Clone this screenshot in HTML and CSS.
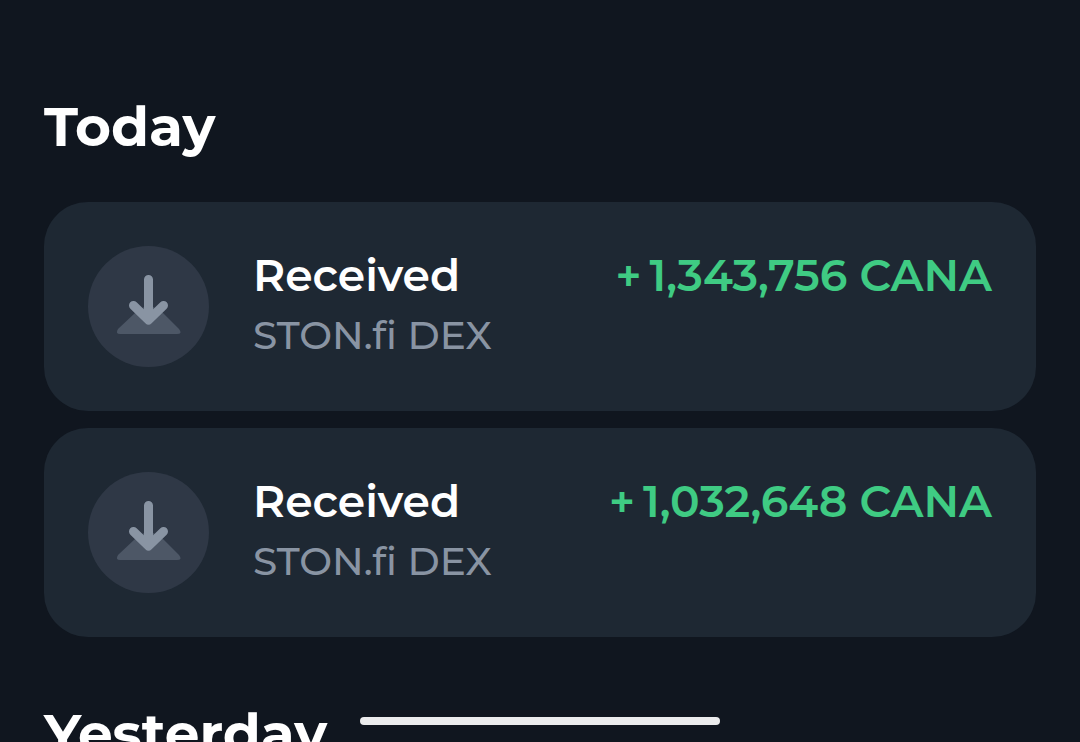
FILE: index.html
```html
<!DOCTYPE html>
<html lang="en">
<head>
    <meta charset="UTF-8">
    <meta name="viewport" content="width=device-width, initial-scale=1">
    <title>History</title>
    <link rel="stylesheet" href="styles.css">
</head>
<body>
    <svg class="sprite" aria-hidden="true">
        <symbol id="icon-receive" viewBox="0 0 121 121">
            <path class="tray" d="M60.5 58 L47 67 L30 83 Q27 88 32 88 H89 Q95 88 91 83 L75 67 Z"/>
            <path class="arrow" d="M60.5 33.500V74 M45.500 59.500L60.500 74L75.500 59.500"/>
        </symbol>
    </svg>
    <main class="history">
        <section class="day">
            <h2 class="title">Today</h2>
            <ul class="list">
                <li class="item">
                    <svg class="icon" aria-hidden="true"><use href="#icon-receive"/></svg>
                    <div class="info">
                        <p class="action">Received</p>
                        <p class="from">STON.fi DEX</p>
                    </div>
                    <p class="amount"><span class="sign">+</span>1,343,756 CANA</p>
                </li>
                <li class="item">
                    <svg class="icon" aria-hidden="true"><use href="#icon-receive"/></svg>
                    <div class="info">
                        <p class="action">Received</p>
                        <p class="from">STON.fi DEX</p>
                    </div>
                    <p class="amount"><span class="sign">+</span>1,032,648 CANA</p>
                </li>
            </ul>
        </section>
        <section class="day">
            <h2 class="title">Yesterday</h2>
        </section>
    </main>
    <div class="home-bar"></div>
</body>
</html>
```

FILE: styles.css
```css
*{
    margin: 0;
    padding: 0;
    box-sizing: border-box;
}
body{
    background: #10161f;
    color: #fff;
    font-family: Montserrat, Inter, "Liberation Sans", sans-serif;
}
.sprite{
    display: none;
}
.history{
    height: 100vh;
    padding: 90px 44px 0;
    overflow: hidden;
}
.day{
    margin-bottom: 60px;
}
.day .title{
    margin-bottom: 38px;
    font-size: 55px;
    line-height: 74px;
    font-weight: 700;
}
.list{
    display: flex;
    flex-direction: column;
    gap: 17px;
    list-style: none;
}
.item{
    display: flex;
    align-items: flex-start;
    gap: 44px;
    padding: 44px;
    border-radius: 44px;
    background: #1e2833;
}
.item .icon{
    flex: none;
    width: 121px;
    height: 121px;
    border-radius: 50%;
    background: #2f3846;
}
.tray{
    fill: #4d5766;
}
.arrow{
    fill: none;
    stroke: #8994a3;
    stroke-width: 9;
    stroke-linecap: round;
    stroke-linejoin: round;
}
.item .info{
    flex: 1;
}
.item .action,
.item .amount{
    font-size: 44px;
    line-height: 58px;
    font-weight: 600;
    white-space: nowrap;
}
.item .from{
    color: #8994a3;
    font-size: 39px;
    line-height: 62px;
    font-weight: 500;
}
.item .amount{
    color: #3fcb83;
}
.item .sign{
    margin-right: 8px;
}

/* home indicator */
.home-bar{
    position: fixed;
    left: 0;
    right: 0;
    bottom: 17px;
    width: 33.3%;
    height: 8px;
    margin: 0 auto;
    border-radius: 4px;
    background: #ebeced;
}
```
